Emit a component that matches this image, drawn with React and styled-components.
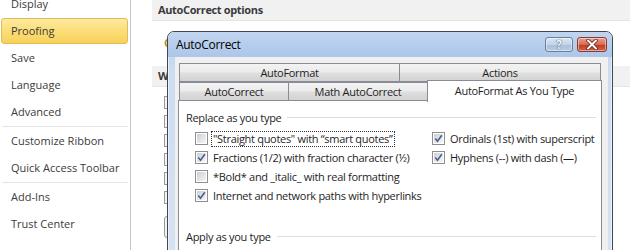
import React from 'react'
import styled, { createGlobalStyle } from 'styled-components'

const GlobalStyle = createGlobalStyle`
  html, body { margin: 0; padding: 0; }
  body {
    width: 630px;
    height: 250px;
    overflow: hidden;
    background: #fff;
    font-family: "Open Sans", "Noto Sans", sans-serif;
    font-size: 11px;
    color: #1e1e1e;
  }
`

const Page = styled.div`
  position: relative;
  display: flex;
  height: 250px;
  overflow: hidden;
`

const Sidebar = styled.div`
  width: 130px;
  flex: none;
  border-right: 1px solid #c6c6c6;
  margin-top: -10px;
`

const NavItem = styled.div`
  height: 24px;
  line-height: 24px;
  margin: 1px 2px 1px 1px;
  padding-left: 9px;
  font-size: 11px;
  color: #3b3b3b;
  border: 1px solid ${p => (p.$active ? '#e0bb57' : 'transparent')};
  border-radius: 3px;
  background: ${p => (p.$active ? 'linear-gradient(#fdeba0, #fbdd78 50%, #f8d15a)' : 'transparent')};
`

const NavSep = styled.div`
  height: 1px;
  margin: 1px 2px;
  background: #e3e3e3;
`

const Main = styled.div`
  flex: 1;
  margin-left: 21px;
  letter-spacing: -0.3px;
`

const Band = styled.div`
  height: ${p => p.$h}px;
  line-height: ${p => p.$h}px;
  padding-left: 6px;
  background: #f1f1f1;
  border-bottom: 1px solid #e4e4e4;
  font-weight: 700;
  letter-spacing: -0.35px;
  color: #3a3a3a;
  white-space: nowrap;
`

const IntroRow = styled.div`
  height: 45px;
  padding: 14px 0 0 12px;
  box-sizing: border-box;
  color: #c08a1c;
  font-weight: 700;
`

const BackList = styled.div`
  display: flex;
  flex-direction: column;
  gap: 6px;
  padding: 9px 0 0 12px;
`

const BackBox = styled.div`
  width: 11px;
  height: 11px;
  border: 1px solid #9a9a9a;
  background: #f4f4f4;
`

const BackButton = styled.div`
  width: 60px;
  height: 20px;
  margin-top: 6px;
  border: 1px solid #9a9a9a;
  border-radius: 3px;
  background: #f2f2f2;
`

const Dialog = styled.div`
  position: absolute;
  left: 167px;
  top: 31px;
  width: 444px;
  height: 240px;
  border: 1px solid #3f4753;
  border-radius: 7px 7px 0 0;
  background: linear-gradient(#bcd2ee, #cddcf0 40px, #d6e3f3);
  box-shadow: 0 0 0 1px rgba(255, 255, 255, 0.6) inset;
  letter-spacing: -0.3px;
`

const TitleBar = styled.div`
  height: 25px;
  display: flex;
  align-items: flex-start;
  padding: 5px 5px 0 8px;
  box-sizing: border-box;
  background: linear-gradient(#c0d5f0, #adc6e8);
  border-radius: 6px 6px 0 0;
`

const Title = styled.div`
  flex: 1;
  font-size: 12px;
  line-height: 16px;
  color: #000;
`

const CaptionButton = styled.div`
  width: ${p => p.$w}px;
  height: 15px;
  margin-left: ${p => p.$gap}px;
  box-sizing: border-box;
  display: flex;
  align-items: center;
  justify-content: center;
  border: 1px solid ${p => (p.$close ? '#8d3a2c' : '#6d7f98')};
  border-radius: 3px;
  background: ${p =>
    p.$close
      ? 'linear-gradient(#eaa091, #d86a55 50%, #c2381f 51%, #d0644b)'
      : 'linear-gradient(#dce7f5, #c2d3ea 50%, #a9bfdd 51%, #b8cbe6)'};
  box-shadow: 0 0 0 1px rgba(255, 255, 255, 0.45) inset;
`

const HelpMark = styled.span`
  color: #f4f6f9;
  font-weight: 700;
  font-size: 12px;
  line-height: 13px;
  text-shadow: 0 0 1px #44546a, 0 0 1px #44546a;
`

const Client = styled.div`
  margin: 0 4px 0 7px;
  padding: 6px 6px 0 3px;
  height: 220px;
  background: #f0f0f0;
`

const TabRow = styled.div`
  display: flex;
  margin-left: 1px;
  height: 19px;
  position: relative;
`

const Tab = styled.div`
  width: ${p => p.$w}px;
  flex: none;
  box-sizing: border-box;
  height: ${p => (p.$selected ? 22 : 19)}px;
  margin-top: ${p => (p.$selected ? -2 : 0)}px;
  margin-left: -1px;
  border: 1px solid #898c95;
  border-bottom: ${p => (p.$selected ? 'none' : '1px solid #898c95')};
  background: ${p =>
    p.$selected ? '#fff' : 'linear-gradient(#f3f3f3, #ececec 45%, #dedede 55%, #d2d2d2)'};
  text-align: center;
  line-height: ${p => (p.$selected ? 20 : 17)}px;
  color: #1e1e1e;
  position: relative;
  z-index: ${p => (p.$selected ? 2 : 1)};
  &:first-child { margin-left: 0; }
`

const Panel = styled.div`
  width: 424px;
  height: 160px;
  margin-top: -1px;
  box-sizing: border-box;
  border: 1px solid #898c95;
  background: #fff;
  position: relative;
  z-index: 1;
  padding: 7px 0 0 7px;
`

const GroupTitle = styled.div`
  display: flex;
  align-items: center;
  height: 18px;
  padding-right: 5px;
  &::after {
    content: '';
    flex: 1;
    height: 1px;
    margin-left: 6px;
    background: #d5dfe5;
  }
`

const OptionGrid = styled.div`
  display: grid;
  grid-template-columns: 237px auto;
  grid-auto-rows: 19px;
  margin: 3px 0 0 9px;
  align-items: center;
`

const Option = styled.div`
  display: flex;
  align-items: center;
  white-space: nowrap;
`

const Box = styled.div`
  width: 13px;
  height: 13px;
  flex: none;
  box-sizing: border-box;
  border: 1px solid #8e8f8f;
  padding: 1px;
  background: #fff;
  margin-right: 3px;
`

const BoxInner = styled.div`
  width: 100%;
  height: 100%;
  background: linear-gradient(135deg, #cbcfd5, #f6f6f6);
  position: relative;
`

const CheckMark = styled.svg`
  position: absolute;
  left: 0;
  top: 0;
`

const Label = styled.span`
  padding: 0 1px;
  border: 1px ${p => (p.$focus ? 'dotted #333' : 'solid transparent')};
  line-height: 14px;
`

const Spacer = styled.div`
  height: ${p => p.$h}px;
`

const Check = ({ on }) => (
  <Box>
    <BoxInner>
      {on && (
        <CheckMark width="9" height="9" viewBox="0 0 9 9">
          <path d="M1.3 4.6 L3.5 7.2 L7.8 1.2" fill="none" stroke="#4a5e94" strokeWidth="1.6" />
        </CheckMark>
      )}
    </BoxInner>
  </Box>
)

const nav = [
  ['Display'],
  ['Proofing', true],
  ['Save'],
  ['Language'],
  ['Advanced'],
  '-',
  ['Customize Ribbon'],
  ['Quick Access Toolbar'],
  '-',
  ['Add-Ins'],
  ['Trust Center'],
]

const options = [
  ['"Straight quotes" with \u201Csmart quotes\u201D', false, true],
  ['Ordinals (1st) with superscript', true],
  ['Fractions (1/2) with fraction character (\u00BD)', true],
  ['Hyphens (--) with dash (\u2014)', true],
  ['*Bold* and _italic_ with real formatting', false],
  [null],
  ['Internet and network paths with hyperlinks', true],
  [null],
]

export default function App() {
  return (
    <>
      <GlobalStyle />
      <Page>
        <Sidebar>
          {nav.map((n, i) =>
            n === '-' ? <NavSep key={i} /> : <NavItem key={i} $active={n[1]}>{n[0]}</NavItem>
          )}
        </Sidebar>
        <Main>
          <Band $h={20}>AutoCorrect options</Band>
          <IntroRow>C</IntroRow>
          <Band $h={20}>When correcting spelling in Microsoft Office programs</Band>
          <BackList>
            {[0, 1, 2, 3, 4, 5].map(i => <BackBox key={i} />)}
            <BackButton />
          </BackList>
        </Main>

        <Dialog>
          <TitleBar>
            <Title>AutoCorrect</Title>
            <CaptionButton $w={28} $gap={0}>
              <HelpMark>?</HelpMark>
            </CaptionButton>
            <CaptionButton $w={30} $gap={4} $close>
              <svg width="14" height="11" viewBox="0 0 14 11">
                <path d="M3 1.5 L11 9.5 M11 1.5 L3 9.5" stroke="#5a1a10" strokeWidth="3.4" strokeLinecap="round" />
                <path d="M3 1.5 L11 9.5 M11 1.5 L3 9.5" stroke="#fff" strokeWidth="2" strokeLinecap="round" />
              </svg>
            </CaptionButton>
          </TitleBar>
          <Client>
            <TabRow>
              <Tab $w={221}>AutoFormat</Tab>
              <Tab $w={202}>Actions</Tab>
            </TabRow>
            <TabRow>
              <Tab $w={110}>AutoCorrect</Tab>
              <Tab $w={140}>Math AutoCorrect</Tab>
              <Tab $w={175} $selected>AutoFormat As You Type</Tab>
            </TabRow>
            <Panel>
              <GroupTitle>Replace as you type</GroupTitle>
              <OptionGrid>
                {options.map((o, i) =>
                  o[0] === null ? (
                    <div key={i} />
                  ) : (
                    <Option key={i}>
                      <Check on={o[1]} />
                      <Label $focus={o[2]}>{o[0]}</Label>
                    </Option>
                  )
                )}
              </OptionGrid>
              <Spacer $h={22} />
              <GroupTitle>Apply as you type</GroupTitle>
            </Panel>
          </Client>
        </Dialog>
      </Page>
    </>
  )
}
